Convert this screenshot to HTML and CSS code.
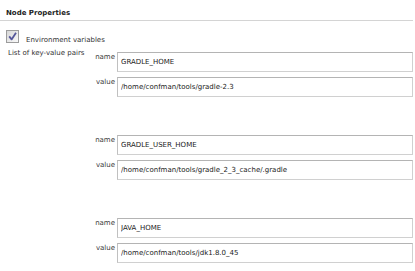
FILE: index.html
```html
<!DOCTYPE html>
<html lang="en">
<head>
  <meta charset="UTF-8">
  <title>Node Properties</title>
  <link rel="stylesheet" href="styles.css">
</head>
<body>
  <div class="section-header">Node Properties</div>

  <div class="checkbox-row">
    <svg class="checkbox" width="13" height="13" viewBox="0 0 13 13">
      <defs>
        <linearGradient id="cbfill" x1="0" y1="0" x2="1" y2="1">
          <stop offset="0" stop-color="#d6d6d6"/>
          <stop offset="1" stop-color="#fbfbfb"/>
        </linearGradient>
      </defs>
      <rect x="0.5" y="0.5" width="12" height="12" fill="url(#cbfill)" stroke="#9c9c9c"/>
      <path d="M3.2 6.4 L5.6 9.4 L10 2.8" fill="none" stroke="#55579a" stroke-width="1.8" stroke-linejoin="round"/>
    </svg>
    <label class="checkbox-label">Environment variables</label>
  </div>

  <div class="kv-table">
    <div class="kv-title">List of key-value pairs</div>
    <div class="kv-list">
      <div class="kv-chunk">
        <div class="kv-row">
          <span class="kv-label">name</span>
          <input class="kv-input" type="text" value="GRADLE_HOME" readonly>
        </div>
        <div class="kv-row">
          <span class="kv-label">value</span>
          <input class="kv-input" type="text" value="/home/confman/tools/gradle-2.3" readonly>
        </div>
      </div>
      <div class="kv-chunk">
        <div class="kv-row">
          <span class="kv-label">name</span>
          <input class="kv-input" type="text" value="GRADLE_USER_HOME" readonly>
        </div>
        <div class="kv-row">
          <span class="kv-label">value</span>
          <input class="kv-input" type="text" value="/home/confman/tools/gradle_2_3_cache/.gradle" readonly>
        </div>
      </div>
      <div class="kv-chunk">
        <div class="kv-row">
          <span class="kv-label">name</span>
          <input class="kv-input" type="text" value="JAVA_HOME" readonly>
        </div>
        <div class="kv-row">
          <span class="kv-label">value</span>
          <input class="kv-input" type="text" value="/home/confman/tools/jdk1.8.0_45" readonly>
        </div>
      </div>
    </div>
  </div>
</body>
</html>
```

FILE: styles.css
```css
body {
  font-family: "DejaVu Sans", Verdana, sans-serif;
  font-size: 7px;
  line-height: 9px;
  margin: 0;
  padding: 0;
  background-color: #fff;
  color: #333;
}
.section-header {
  font-weight: bold;
  color: #222;
  margin-right: 2px;
  padding: 9px 0 2px 6px;
  border-bottom: 1px solid #d4d4d4;
}
.checkbox-row {
  display: flex;
  align-items: flex-start;
  margin-top: 9px;
  padding-left: 6px;
}
.checkbox {
  display: block;
  flex-shrink: 0;
}
.checkbox-label {
  margin-left: 7px;
  padding-top: 6px;
}
.kv-table {
  display: flex;
  margin-top: 4px;
  margin-right: 2px;
  padding-left: 8px;
}
.kv-title {
  width: 80px;
  flex-shrink: 0;
}
.kv-list {
  flex: 1;
  padding-top: 3px;
}
.kv-chunk {
  margin-bottom: 38px;
}
.kv-chunk:last-child {
  margin-bottom: 0;
}
.kv-row {
  display: flex;
  align-items: flex-start;
  margin-bottom: 5px;
}
.kv-row:last-child {
  margin-bottom: 0;
}
.kv-label {
  width: 27px;
  flex-shrink: 0;
  text-align: right;
  padding-top: 1px;
  margin-right: 2px;
  color: #3a3a3a;
}
.kv-input {
  flex: 1;
  min-width: 0;
  box-sizing: border-box;
  height: 20px;
  margin: 0;
  padding: 0 3px;
  font-family: "DejaVu Sans", Verdana, sans-serif;
  font-size: 7px;
  color: #1a1a1a;
  background-color: #fff;
  border: 1px solid #d0d0d0;
  border-top-color: #b4b4b4;
  border-left-color: #c0c0c0;
  border-radius: 0;
  outline: none;
}
```
